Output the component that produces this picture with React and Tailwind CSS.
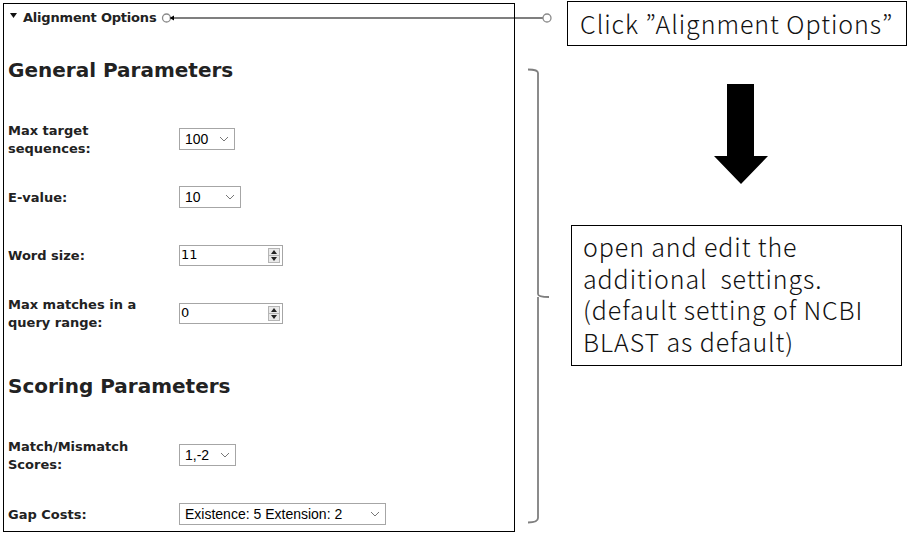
import React from 'react';

const ui = { fontFamily: '"DejaVu Sans", Verdana, sans-serif' };
const ctl = { fontFamily: '"Liberation Sans", Arial, sans-serif' };
const jp = { fontFamily: '"Noto Sans CJK JP", "Noto Sans", sans-serif' };

const Chevron = () => (
  <svg width="10" height="6" viewBox="0 0 10 6" className="shrink-0">
    <path d="M1 1 L5 5 L9 1" fill="none" stroke="#777" strokeWidth="1" />
  </svg>
);

const Select = ({ value, width }) => (
  <div
    className="flex items-center justify-between h-[22px] border border-[#a6a6a6] bg-white pl-[5px] pr-[5px] text-[14px] text-black"
    style={{ ...ctl, width }}
  >
    <span>{value}</span>
    <Chevron />
  </div>
);

const NumberInput = ({ value }) => (
  <div
    className="flex items-center justify-between w-[104px] h-[21px] border border-[#a6a6a6] bg-white pl-[1px] pr-[2px] text-[13px] text-black"
    style={ui}
  >
    <span>{value}</span>
    <div className="flex flex-col w-[12px] h-[15px] border border-[#b5b5b5] bg-[#e9e9e9]">
      <div className="flex-1 flex items-center justify-center border-b border-[#b5b5b5]">
        <svg width="6" height="4" viewBox="0 0 6 4"><path d="M0 4 L3 0 L6 4 Z" fill="#222" /></svg>
      </div>
      <div className="flex-1 flex items-center justify-center">
        <svg width="6" height="4" viewBox="0 0 6 4"><path d="M0 0 L3 4 L6 0 Z" fill="#222" /></svg>
      </div>
    </div>
  </div>
);

const Row = ({ label, children, className = 'h-[58px]' }) => (
  <div className={`flex items-center ${className}`}>
    <div className="w-[171px] pt-[1px] text-[13px] font-bold leading-[18px] text-[#222]" style={ui}>
      {label}
    </div>
    {children}
  </div>
);

const Heading = ({ children, className }) => (
  <h2 className={`h-[28px] flex items-center text-[20px] font-bold text-[#222] ${className}`} style={ui}>
    {children}
  </h2>
);

export default function App() {
  return (
    <div className="relative w-[911px] h-[534px] bg-white overflow-hidden flex">
      {/* settings panel */}
      <div className="ml-[3px] mt-[3px] w-[512px] h-[529px] border border-black pl-[4px] shrink-0">
        <div className="h-[28px] flex items-center gap-[6px] text-[13px] font-bold tracking-[-0.2px] text-[#222]" style={ui}>
          <svg width="7" height="5" viewBox="0 0 7 5" className="ml-[2px] -mt-[6px]"><path d="M0 0 L7 0 L3.5 5 Z" fill="#111" /></svg>
          <span>Alignment Options</span>
        </div>

        <Heading className="mt-[24px]">General Parameters</Heading>
        <div className="mt-[26px]">
          <Row label={<>Max target<br />sequences:</>}><Select value="100" width={56} /></Row>
          <Row label="E-value:"><Select value="10" width={62} /></Row>
          <Row label="Word size:"><NumberInput value="11" /></Row>
          <Row label={<>Max matches in a<br />query range:</>}><NumberInput value="0" /></Row>
        </div>

        <Heading className="mt-[30px]">Scoring Parameters</Heading>
        <div className="mt-[26px]">
          <Row label={<>Match/Mismatch<br />Scores:</>}><Select value="1,-2" width={57} /></Row>
          <Row label="Gap Costs:" className="h-[22px] mt-[19px]"><Select value="Existence: 5 Extension: 2" width={207} /></Row>
        </div>
      </div>

      {/* callouts */}
      <div className="flex-1 flex flex-col text-[#111] font-light" style={jp}>
        <div className="ml-[52px] mt-[1px] w-[340px] h-[45px] border border-black flex items-center pl-[12px] text-[25px] tracking-[0.95px] leading-none whitespace-nowrap">
          Click ”Alignment Options”
        </div>
        <svg width="56" height="101" viewBox="0 0 56 101" className="mt-[38px] ml-[198px]">
          <path d="M14 0 H41 V72 H55 L28 100 L1 72 H14 Z" fill="#000" />
        </svg>
        <div className="ml-[56px] mt-[40px] w-[331px] h-[141px] border border-black pl-[11px] pt-[5px] text-[25px] tracking-[0.9px] leading-[31.7px] whitespace-nowrap">
          open and edit the<br />
          additional&nbsp; settings.<br />
          (default setting of NCBI<br />
          BLAST as default)
        </div>
      </div>

      {/* connector and brace */}
      <svg className="absolute inset-0 pointer-events-none" width="911" height="534" viewBox="0 0 911 534">
        <circle cx="166.5" cy="18" r="4" fill="#fff" stroke="#8a8a8a" strokeWidth="1.3" />
        <path d="M169.5 18 L174 15.5 L174 20.5 Z" fill="#000" />
        <line x1="172" y1="18" x2="543" y2="18" stroke="#000" strokeWidth="1.2" />
        <circle cx="547" cy="18" r="4" fill="#fff" stroke="#8a8a8a" strokeWidth="1.3" />
        <path d="M528 69.5 Q538 69.5 538 73 V294 Q538 297 549 297 M538 297 Q538 300 538 302 V518 Q538 522.5 528 522.5" fill="none" stroke="#7f7f7f" strokeWidth="1.8" />
      </svg>
    </div>
  );
}
